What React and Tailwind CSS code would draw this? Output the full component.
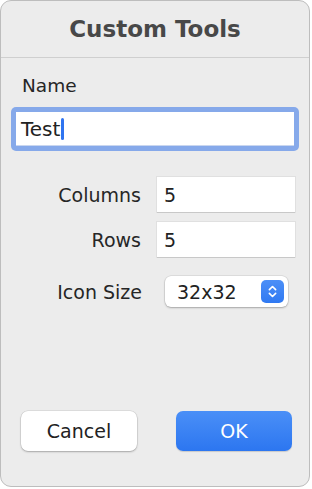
import { ChevronsUpDown } from 'lucide-react';

const font = { fontFamily: '"DejaVu Sans", "Liberation Sans", sans-serif' };

const App = () => {
  return (
    <div className="h-[489px] w-[312px] bg-white" style={font}>
      <div className="flex h-[487px] w-[310px] flex-col rounded-[11px] border border-[#bdbdbd] bg-[#ececec]">
        <div className="flex h-[57px] items-center justify-center border-b border-[#cfcfcf]">
          <h1 className="text-[23px] font-bold leading-[28px] text-[#484848]">Custom Tools</h1>
        </div>
        <div className="px-[10px] pt-[18px]">
          <p className="pl-[11px] text-[18.5px] leading-[20px] text-[#262626]">Name</p>
          <div className="mt-[11px] rounded-[5px] bg-[#86a9ea] p-[5px]">
            <div className="flex h-[34px] items-center bg-white pl-[5px] text-[20px] leading-[24px] text-[#222] shadow-[inset_0_-1px_0_#c9d6ef]">
              Test
              <span className="ml-[1px] h-[22px] w-[3px] rounded-full bg-[#2f74f0]" />
            </div>
          </div>
        </div>
        <div className="mt-[26px] grid grid-cols-[140px_138px] items-center gap-x-[16px] gap-y-[10px] pr-[14px]">
          <span className="text-right text-[19px] leading-[22px] text-[#262626]">Columns</span>
          <div className="flex h-[35px] items-center bg-white pl-[7px] text-[19px] leading-[22px] text-[#222] shadow-[0_1px_0_#c8c8c8,0_0_0_1px_#e0e0e0]">5</div>
          <span className="text-right text-[19px] leading-[22px] text-[#262626]">Rows</span>
          <div className="flex h-[35px] items-center bg-white pl-[7px] text-[19px] leading-[22px] text-[#222] shadow-[0_1px_0_#c8c8c8,0_0_0_1px_#e0e0e0]">5</div>
        </div>
        <div className="mt-[19px] flex items-center pr-[20px]">
          <span className="w-[141px] text-right text-[19px] leading-[22px] text-[#262626]">Icon Size</span>
          <div className="ml-[23px] flex h-[31px] w-[123px] items-center justify-between rounded-[6px] bg-white pl-[12px] pr-[4px] text-[19px] leading-[22px] text-[#222] shadow-[0_1px_2px_rgba(0,0,0,0.25),0_0_0_0.5px_rgba(0,0,0,0.12)]">
            32x32
            <span className="flex h-[23px] w-[23px] items-center justify-center rounded-[5px] bg-gradient-to-b from-[#4c8ff7] to-[#2f79f2]">
              <ChevronsUpDown className="h-[15px] w-[15px] text-white" strokeWidth={2.6} />
            </span>
          </div>
        </div>
        <div className="mt-auto mb-[35px] flex items-center justify-between px-[17px]">
          <button type="button" className="ml-[3px] h-[40px] w-[116px] rounded-[7px] bg-white text-[19px] leading-[22px] text-[#222] shadow-[0_1px_2px_rgba(0,0,0,0.25),0_0_0_0.5px_rgba(0,0,0,0.12)]">Cancel</button>
          <button type="button" className="h-[40px] w-[116px] rounded-[7px] bg-gradient-to-b from-[#4a8ff7] to-[#2c76f0] text-[19px] leading-[22px] text-white shadow-[0_1px_1px_rgba(0,0,0,0.15)]">OK</button>
        </div>
      </div>
    </div>
  );
};

export default App;
